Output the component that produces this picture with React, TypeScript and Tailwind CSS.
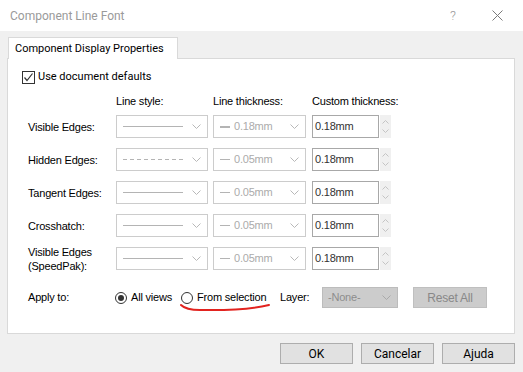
import React from 'react';

const ui = "font-['Roboto',sans-serif] text-[11px]";
const dlg = "font-['Liberation_Sans',Arial,sans-serif] text-[11px] tracking-[-0.2px]";

type Row = {
  label: string[];
  dashed?: boolean;
  thick: string;
  heavy?: boolean;
};

const rows: Row[] = [
  { label: ['Visible Edges:'], thick: '0.18mm', heavy: true },
  { label: ['Hidden Edges:'], thick: '0.05mm', dashed: true },
  { label: ['Tangent Edges:'], thick: '0.05mm' },
  { label: ['Crosshatch:'], thick: '0.05mm' },
  { label: ['Visible Edges', '(SpeedPak):'], thick: '0.05mm' }
];

function Chevron({ color = '#b8b8b8' }: { color?: string }) {
  return (
    <svg width="9" height="5" viewBox="0 0 9 5" className="shrink-0">
      <path d="M0.5 0.5 L4.5 4.5 L8.5 0.5" fill="none" stroke={color} strokeWidth="1" />
    </svg>
  );
}

function Spinner() {
  return (
    <div className="w-[11px] h-[23px] bg-[#f0f0f0] flex flex-col items-center justify-center gap-[5px]">
      <svg width="7" height="4" viewBox="0 0 7 4">
        <path d="M0.5 3.5 L3.5 0.5 L6.5 3.5" fill="none" stroke="#c4c4c4" />
      </svg>
      <svg width="7" height="4" viewBox="0 0 7 4">
        <path d="M0.5 0.5 L3.5 3.5 L6.5 0.5" fill="none" stroke="#c4c4c4" />
      </svg>
    </div>
  );
}

function EdgeRow({ row }: { row: Row }) {
  return (
    <div className="flex items-center h-[23px]">
      <div className={`${dlg} w-[88px] leading-[14px] text-black`}>
        {row.label.map((l) => (
          <div key={l}>{l}</div>
        ))}
      </div>
      {/* line style */}
      <div className="w-[92px] h-[23px] border border-[#cccccc] bg-white flex items-center pl-[6px] pr-[6px]">
        <div className="flex-1">
          <svg width="60" height="3" viewBox="0 0 60 3">
            <line
              x1="0"
              y1="1.5"
              x2="60"
              y2="1.5"
              stroke="#b4b4b4"
              strokeWidth="1"
              strokeDasharray={row.dashed ? '4 3' : undefined}
            />
          </svg>
        </div>
        <Chevron />
      </div>
      {/* line thickness */}
      <div className="ml-[5px] w-[93px] h-[23px] border border-[#cccccc] bg-white flex items-center pl-[6px] pr-[6px]">
        <div className={`flex-1 flex items-center gap-[4px] ${dlg} text-[#ababab]`}>
          <div className={`w-[10px] bg-[#b4b4b4] ${row.heavy ? 'h-[2px]' : 'h-px'}`} />
          <span>{row.thick}</span>
        </div>
        <Chevron />
      </div>
      {/* custom */}
      <div className={`ml-[6px] w-[67px] h-[23px] border border-[#a8a8a8] bg-white pl-[2px] pt-[3px] ${dlg} text-[#333] leading-[14px]`}>
        0.18mm
      </div>
      <div className="ml-[1px]">
        <Spinner />
      </div>
    </div>
  );
}

function Radio({ checked }: { checked?: boolean }) {
  return (
    <div className="w-[12px] h-[12px] rounded-full border border-[#333] bg-white flex items-center justify-center shrink-0">
      {checked && <div className="w-[6px] h-[6px] rounded-full bg-[#333]" />}
    </div>
  );
}

function Button({ children }: { children: React.ReactNode }) {
  return (
    <div className={`${ui} text-[12px] w-[73px] h-[21px] bg-[#e1e1e1] border border-[#adadad] flex items-center justify-center text-black`}>
      {children}
    </div>
  );
}

export default function App() {
  return (
    <div className="w-[523px] h-[372px] bg-[#f0f0f0] flex flex-col overflow-hidden">
      {/* Title bar */}
      <div className="h-[31px] bg-white flex items-center shrink-0">
        <span className={`${ui} text-[12px] pl-[10px] text-[#9a9a9a] flex-1`}>Component Line Font</span>
        <span className={`${ui} text-[13px] font-light text-[#9a9a9a] w-[14px] text-center mr-[32px]`}>?</span>
        <svg width="11" height="11" viewBox="0 0 11 11" className="mr-[20px]">
          <path d="M0.5 0.5 L10.5 10.5 M10.5 0.5 L0.5 10.5" stroke="#7a7a7a" strokeWidth="1" />
        </svg>
      </div>

      {/* Tabs */}
      <div className="px-[7px] pt-[6px]">
        <div className="flex">
          <div className={`${ui} text-[11.5px] ml-[1px] w-[170px] relative z-10 h-[22px] -mb-px bg-white border border-b-0 border-[#d9d9d9] pl-[6px] pt-[3px] text-black`}>
            Component Display Properties
          </div>
        </div>
        <div className="w-[508px] h-[276px] bg-white border border-[#d9d9d9] pl-[14px] pt-[12px]">
          {/* Use document defaults */}
          <div className="flex items-center h-[13px]">
            <div className="w-[13px] h-[13px] border border-[#333] bg-white flex items-center justify-center">
              <svg width="11" height="11" viewBox="0 0 11 11">
                <path d="M1.5 5.5 L4 8.5 L9.5 1.5" fill="none" stroke="#333" strokeWidth="1.2" />
              </svg>
            </div>
            <span className={`${ui} ml-[3px] text-black`}>Use document defaults</span>
          </div>

          <div className="pl-[6px]">
            {/* headers */}
            <div className={`${dlg} flex mt-[10px] h-[14px] leading-[14px] text-black`}>
              <div className="w-[88px]" />
              <div className="w-[97px]">Line style:</div>
              <div className="w-[99px]">Line thickness:</div>
              <div>Custom thickness:</div>
            </div>

            <div className="mt-[7px] flex flex-col gap-[10px]">
              {rows.map((r) => (
                <EdgeRow key={r.label.join(' ')} row={r} />
              ))}
            </div>

            {/* Apply to */}
            <div className={`${dlg} mt-[17px] h-[21px] flex items-center text-black`}>
              <div className="w-[87px]">Apply to:</div>
              <div className="w-[66px] flex items-center">
                <Radio checked />
                <span className="ml-[4px]">All views</span>
              </div>
              <div className="w-[99px] relative flex items-center">
                <Radio />
                <span className="ml-[4px]">From selection</span>
                <svg
                  width="92"
                  height="10"
                  viewBox="0 0 92 10"
                  className="absolute left-[-1px] top-[14px]"
                >
                  <path
                    d="M1 2 C 4 5, 8 7, 20 7 C 45 7.5, 70 6.5, 89 2"
                    fill="none"
                    stroke="#e2231f"
                    strokeWidth="2"
                    strokeLinecap="round"
                  />
                </svg>
              </div>
              <span className="w-[42px]">Layer:</span>
              <div className="w-[76px] h-[21px] bg-[#cccccc] border border-[#bcbcbc] flex items-center pl-[5px] pr-[6px] text-[#8c8c8c]">
                <span className="flex-1">-None-</span>
                <Chevron color="#a9a9a9" />
              </div>
              <div className="ml-[15px] w-[74px] h-[21px] bg-[#cccccc] border border-[#bfbfbf] flex items-center justify-center text-[12px] text-[#888888]">
                Reset All
              </div>
            </div>
          </div>
        </div>
      </div>

      {/* Footer */}
      <div className="flex justify-end gap-[8px] pr-[8px] pt-[9px]">
        <Button>OK</Button>
        <Button>Cancelar</Button>
        <Button>Ajuda</Button>
      </div>
    </div>
  );
}
